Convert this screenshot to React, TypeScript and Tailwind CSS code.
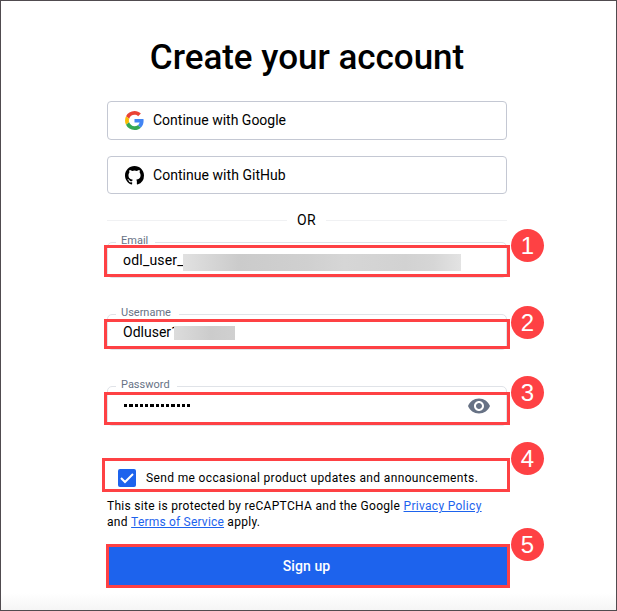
import type { ReactNode } from "react";

function Badge({ n, className }: { n: number; className: string }) {
  return (
    <span
      className={`absolute flex h-[33px] w-[33px] items-center justify-center rounded-full bg-[#fe4144] font-['Liberation_Sans',sans-serif] text-[24px] leading-none tracking-normal text-white ${className}`}
    >
      {n}
    </span>
  );
}

function Marker({ className }: { className: string }) {
  return <span className={`pointer-events-none absolute border-[3px] border-[#fe4144] ${className}`} />;
}

function GoogleIcon() {
  return (
    <svg viewBox="0 0 48 48" className="h-[19px] w-[19px]">
      <path fill="#ea4335" d="M24 9.5c3.54 0 6.71 1.22 9.21 3.6l6.85-6.85C35.9 2.38 30.47 0 24 0 14.62 0 6.51 5.38 2.56 13.22l7.98 6.19C12.43 13.72 17.74 9.5 24 9.5z" />
      <path fill="#4285f4" d="M46.98 24.55c0-1.57-.15-3.09-.38-4.55H24v9.02h12.94c-.58 2.96-2.26 5.48-4.78 7.18l7.73 6c4.51-4.18 7.09-10.36 7.09-17.65z" />
      <path fill="#fbbc05" d="M10.53 28.59A14.5 14.5 0 0 1 9.77 24c0-1.6.27-3.14.76-4.59l-7.98-6.19A23.9 23.9 0 0 0 0 24c0 3.88.92 7.54 2.56 10.78l7.97-6.19z" />
      <path fill="#34a853" d="M24 48c6.48 0 11.93-2.13 15.89-5.81l-7.73-6c-2.15 1.45-4.92 2.3-8.16 2.3-6.26 0-11.57-4.22-13.47-9.91l-7.98 6.19C6.51 42.62 14.62 48 24 48z" />
    </svg>
  );
}

function GitHubIcon() {
  return (
    <svg viewBox="0 0 16 16" className="h-[19px] w-[19px]" preserveAspectRatio="none" fill="#000">
      <path d="M8 0C3.58 0 0 3.58 0 8c0 3.54 2.29 6.53 5.47 7.59.4.07.55-.17.55-.38 0-.19-.01-.82-.01-1.49-2.01.37-2.53-.49-2.69-.94-.09-.23-.48-.94-.82-1.13-.28-.15-.68-.52-.01-.53.63-.01 1.08.58 1.23.82.72 1.21 1.87.87 2.33.66.07-.52.28-.87.51-1.07-1.78-.2-3.64-.89-3.64-3.95 0-.87.31-1.59.82-2.15-.08-.2-.36-1.02.08-2.12 0 0 .67-.21 2.2.82a7.6 7.6 0 0 1 4 0c1.53-1.04 2.2-.82 2.2-.82.44 1.1.16 1.92.08 2.12.51.56.82 1.27.82 2.15 0 3.07-1.87 3.75-3.65 3.95.29.25.54.73.54 1.48 0 1.07-.01 1.93-.01 2.2 0 .21.15.46.55.38A8.01 8.01 0 0 0 16 8c0-4.42-3.58-8-8-8z" />
    </svg>
  );
}

function Field({ label, labelClass, className, children }: { label: string; labelClass: string; className: string; children: ReactNode }) {
  return (
    <div className={`relative flex items-center rounded-[5px] border border-[#e0e3e8] pl-[15px] ${className}`}>
      <span className={`absolute -top-[10px] left-2 h-4 bg-white pl-[5px] text-[11px] leading-4 text-[#677285] ${labelClass}`}>{label}</span>
      {children}
    </div>
  );
}

export default function App() {
  return (
    <div className="flex h-[611px] w-[617px] flex-col overflow-hidden border border-[#504b4f] bg-[linear-gradient(to_bottom,#fff_592px,#f5f5f5_609px)] px-[106px] font-[Roboto,sans-serif] text-black">
      <div className="flex w-[400px] flex-col">
        <h1 className="mt-[37px] h-[39px] whitespace-nowrap text-center text-[35px] font-medium leading-[40px] -tracking-[0.02px]">
          Create your account
        </h1>

        <button className="mt-[24px] flex h-[39px] items-center gap-[9px] rounded-[4px] border border-[#c4c8d3] bg-white pl-[17px] text-[14px]">
          <GoogleIcon />
          Continue with Google
        </button>
        <button className="mt-[16px] flex h-[38px] items-center gap-[9px] rounded-[4px] border border-[#c4c8d3] bg-white pl-[17px] text-[14px] tracking-[0.04px]">
          <GitHubIcon />
          Continue with GitHub
        </button>

        <div className="mt-4 flex h-5 items-center gap-[10px] text-[14px] leading-5">
          <span className="h-px w-[180px] bg-[#f0f1f3]" />
          <span className="tracking-[0.3px]">OR</span>
          <span className="h-px flex-1 bg-[#f0f1f3]" />
        </div>

        <Field label="Email" labelClass="w-[39px]" className="mt-[12px] h-[36px]">
          <span className="text-[14px] tracking-[0.2px]">odl_user_</span>
          <span className="absolute left-[75px] top-[11px] h-[17px] w-[278px] bg-[linear-gradient(90deg,#e1e1e1,#cbcbcb_20%,#d0d0d0_45%,#d6d6d6_58%,#d2d2d2_80%,#d6d6d6_90%,#e3e3e3)]" />
          <Marker className="-left-1 top-[2px] h-[32px] w-[406px]" />
          <Badge n={1} className="left-[403px] -top-[14px]" />
        </Field>

        <Field label="Username" labelClass="w-[63px]" className="mt-[36px] h-[36px]">
          <span className="text-[14px]">Odluser1</span>
          <span className="absolute left-[66px] top-[11px] h-[14px] w-[61px] bg-[linear-gradient(90deg,#dcdcdc,#cccccc_60%,#d0d0d0)]" />
          <Marker className="-left-1 top-[4px] h-[30px] w-[406px]" />
          <Badge n={2} className="left-[403px] -top-[9px]" />
        </Field>

        <Field label="Password" labelClass="w-[61px]" className="mt-[36px] h-[40px]">
          <span className="flex gap-[2px] pb-[2px] pl-px">
            {Array.from({ length: 13 }, (_, i) => (
              <span key={i} className="h-[3px] w-[3.25px] bg-black" />
            ))}
          </span>
          <svg viewBox="1 4 22 16" className="ml-auto mr-4 h-[16px] w-[22px]" preserveAspectRatio="none" fill="#677285">
            <path d="M12 4.5C7 4.5 2.73 7.61 1 12c1.73 4.39 6 7.5 11 7.5s9.27-3.11 11-7.5c-1.73-4.39-6-7.5-11-7.5zM12 17c-2.76 0-5-2.24-5-5s2.24-5 5-5 5 2.24 5 5-2.24 5-5 5zm0-8c-1.66 0-3 1.34-3 3s1.34 3 3 3 3-1.34 3-3-1.34-3-3-3z" />
          </svg>
          <Marker className="-left-1 top-[5px] h-[33px] w-[406px]" />
          <Badge n={3} className="left-[403px] -top-[11px]" />
        </Field>

        <label className="relative mt-[32px] flex h-[34px] items-center whitespace-nowrap pl-[11px] pt-[6px] text-[12px] tracking-[0.36px]">
          <span className="mr-[10px] flex h-[18px] w-[18px] items-center justify-center rounded-[2px] bg-[#1d63ed]">
            <svg viewBox="0 0 18 18" className="h-[18px] w-[18px]" fill="none" stroke="#fff" strokeWidth="2">
              <path d="M3 9l4 4 8-8" />
            </svg>
          </span>
          Send me occasional product updates and announcements.
          <Marker className="-left-[5px] top-0 h-[34px] w-[408px]" />
          <Badge n={4} className="left-[404px] -top-4" />
        </label>

        <p className="mt-[6px] whitespace-nowrap text-[12px] leading-4 tracking-[0.3px]">
          This site is protected by reCAPTCHA and the Google{" "}
          <a className="text-[#1d63ed] underline">Privacy Policy</a>
          <br />
          and <a className="tracking-[0.2px] text-[#1d63ed] underline">Terms of Service</a> apply.
        </p>

        <button className="relative mt-[15px] flex h-[42px] items-center justify-center bg-[#1d63ed] pr-px text-[14px] font-medium tracking-[0.1px] text-white">
          Sign up
          <Marker className="-left-px -top-px h-[44px] w-[404px]" />
          <Badge n={5} className="left-[404px] -top-[17px]" />
        </button>
      </div>
    </div>
  );
}
